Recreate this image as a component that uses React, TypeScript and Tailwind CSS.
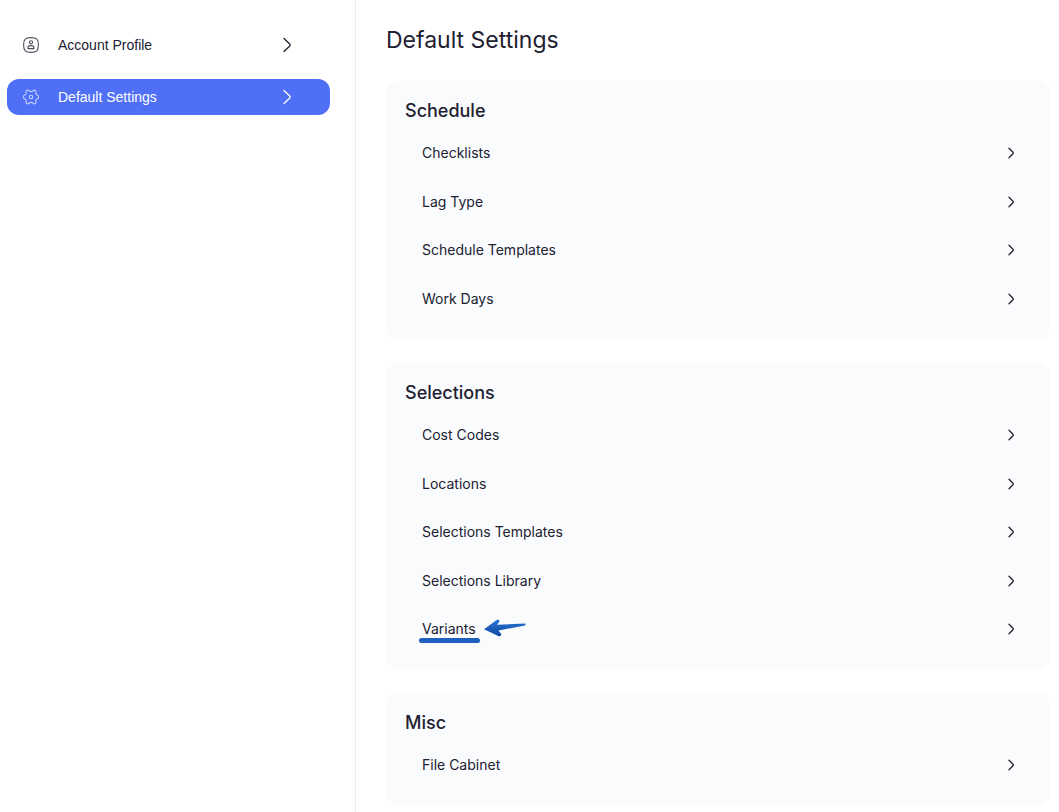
import React from 'react';

interface NavItem {
  label: string;
  icon: React.ReactNode;
  active?: boolean;
}

interface SettingsGroup {
  title: string;
  items: string[];
}

const ProfileIcon: React.FC = () => (
  <svg className="h-4 w-4" viewBox="0 0 16 16" fill="none" stroke="currentColor" strokeWidth="1.1" aria-hidden="true">
    <path d="M8 .6C13.600 .6 15.400 2.400 15.400 8S13.600 15.400 8 15.400.6 13.600.6 8 2.400.6 8 .6Z" />
    <circle cx="8" cy="5.300" r="1.600" />
    <path d="M5 11.600V10.500C5 9.300 6 8.600 8 8.600S11 9.300 11 10.500V11.600Z" strokeLinejoin="round" />
  </svg>
);

const GearIcon: React.FC = () => (
  <svg className="h-4 w-4" viewBox="0 0 16 16" fill="none" stroke="currentColor" strokeWidth="1.1" strokeLinejoin="round" aria-hidden="true">
    <path d="M4.300 1.300Q5.200.8 5.800 1.600 8 3.600 10.200 1.600 10.800.8 11.700 1.300L12.400 1.700Q13.200 2.200 12.900 3.100 12.300 5.400 14.600 6.200 15.500 6.500 15.500 7.400V8.600Q15.500 9.500 14.600 9.800 12.300 10.600 12.900 12.900 13.200 13.800 12.400 14.300L11.700 14.700Q10.800 15.200 10.200 14.400 8 12.400 5.800 14.400 5.200 15.200 4.300 14.700L3.600 14.300Q2.800 13.800 3.100 12.900 3.700 10.600 1.400 9.800.5 9.500.5 8.600V7.400Q.5 6.500 1.400 6.200 3.700 5.400 3.100 3.100 2.800 2.200 3.600 1.700Z" />
    <circle cx="8" cy="8" r="1.700" />
  </svg>
);

const NavChevron: React.FC = () => (
  <svg className="h-4 w-2" viewBox="0 0 8 16" fill="none" stroke="currentColor" strokeWidth="1.300" strokeLinecap="round" aria-hidden="true">
    <path d="M1 1.500L6.500 6.800Q7.700 8 6.500 9.200L1 14.500" />
  </svg>
);

const RowChevron: React.FC = () => (
  <svg className="h-3 w-2" viewBox="0 0 8 12" fill="none" stroke="currentColor" strokeWidth="1.300" strokeLinecap="round" aria-hidden="true">
    <path d="M2 1.300L6 5.200Q6.800 6 6 6.800L2 10.700" />
  </svg>
);

const ArrowMark: React.FC = () => (
  <svg className="absolute top-0 left-full ml-2 h-5 w-11" viewBox="0 0 44 20" aria-hidden="true">
    <defs>
      <linearGradient id="arrow-fill" x1="0" y1="0" x2="0" y2="1">
        <stop offset="0" stopColor="#2a74d8" />
        <stop offset="1" stopColor="#0f469f" />
      </linearGradient>
    </defs>
    <path
      d="M0 10.200L13 .8Q16 .2 15.300 3L13 5.800 41 4.600Q42.200 5.600 41 6.600L14.500 11.500 17.300 15.200Q17.300 17.700 14.800 17.300Z"
      fill="url(#arrow-fill)"
    />
  </svg>
);

const navItems: NavItem[] = [
  { label: 'Account Profile', icon: <ProfileIcon /> },
  { label: 'Default Settings', icon: <GearIcon />, active: true }
];

const groups: SettingsGroup[] = [
  { title: 'Schedule', items: ['Checklists', 'Lag Type', 'Schedule Templates', 'Work Days'] },
  { title: 'Selections', items: ['Cost Codes', 'Locations', 'Selections Templates', 'Selections Library', 'Variants'] },
  { title: 'Misc', items: ['File Cabinet'] }
];

const highlighted = 'Variants';

const Sidebar: React.FC = () => (
  <nav aria-label="Settings" className="w-[356px] shrink-0 border-r border-[#ebebf0] pt-[27px] pr-[25px] pl-[7px]">
    <ul className="flex flex-col gap-4 font-['Liberation_Sans',sans-serif] text-sm">
      {navItems.map(item => (
        <li key={item.label}>
          <a
            href="#"
            aria-current={item.active ? 'page' : undefined}
            className={`flex h-9 items-center rounded-xl pr-[39px] pl-4 ${item.active ? 'bg-[#4f6ff7] text-white' : 'text-[#212131]'}`}
          >
            <span className={item.active ? 'text-[#c6d0ff]' : 'text-[#4c4c59]'}>{item.icon}</span>
            <span className="ml-[19px] flex-1">{item.label}</span>
            <NavChevron />
          </a>
        </li>
      ))}
    </ul>
  </nav>
);

const GroupCard: React.FC<{ group: SettingsGroup }> = ({ group }) => (
  <section className="rounded-xl bg-[#fafbfd] pt-4 pr-[35px] pb-4 pl-[19px]">
    <h2 className="mb-1 text-lg leading-7 font-medium">{group.title}</h2>
    <ul className="pl-[17px]">
      {group.items.map(item => (
        <li key={item} className="h-12 even:h-[49px]">
          <a href="#" className="flex h-full items-center justify-between text-sm">
            {item === highlighted ? (
              <span className="relative">
                {item}
                <span className="absolute -right-1 -bottom-1 -left-[3px] h-[5px] rounded-sm bg-[#1f5fc0]" />
                <ArrowMark />
              </span>
            ) : (
              <span>{item}</span>
            )}
            <RowChevron />
          </a>
        </li>
      ))}
    </ul>
  </section>
);

const App: React.FC = () => {
  return (
    <div className="flex min-h-screen bg-white font-['Inter',sans-serif] text-[#212131]">
      <Sidebar />
      <main className="min-w-0 flex-1 pt-6 pr-[9px] pb-[7px] pl-[30px]">
        <h1 className="mb-[25px] text-[23px] leading-8">Default Settings</h1>
        <div className="flex flex-col gap-6">
          {groups.map(group => (
            <GroupCard key={group.title} group={group} />
          ))}
        </div>
      </main>
    </div>
  );
};

export default App;
